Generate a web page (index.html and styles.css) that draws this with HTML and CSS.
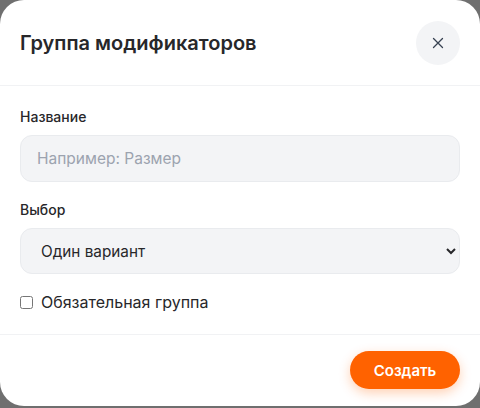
FILE: index.html
```html
<!DOCTYPE html>
<html lang="ru">
<head>
<meta charset="utf-8">
<title>Группа модификаторов</title>
<link rel="stylesheet" href="styles.css">
</head>
<body>
<div class="modal">
  <div class="modal-header">
    <h2 class="modal-title">Группа модификаторов</h2>
    <button class="close-btn" type="button" aria-label="Закрыть">
      <svg width="12" height="12" viewBox="0 0 12 12"><path d="M1.5 1.5 L10.5 10.5 M10.5 1.5 L1.5 10.5" stroke="#374151" stroke-width="1.3" stroke-linecap="round" fill="none"/></svg>
    </button>
  </div>
  <div class="modal-body">
    <div class="field">
      <label class="field-label" for="name">Название</label>
      <input class="control" id="name" type="text" placeholder="Например: Размер">
    </div>
    <div class="field">
      <label class="field-label" for="choice">Выбор</label>
      <select class="control select" id="choice">
        <option>Один вариант</option>
        <option>Несколько вариантов</option>
      </select>
    </div>
    <label class="check-row">
      <input type="checkbox" class="check">
      <span>Обязательная группа</span>
    </label>
  </div>
  <div class="modal-footer">
    <button class="primary-btn" type="button">Создать</button>
  </div>
</div>
</body>
</html>
```

FILE: styles.css
```css
html, body {
  margin: 0;
  padding: 0;
}
body {
  background: #6f6f6f;
  font-family: Inter, "Noto Sans", sans-serif;
  color: #1f2937;
  width: 480px;
  height: 408px;
  overflow: hidden;
}
.modal {
  background: #ffffff;
  width: 480px;
  height: 406px;
  border-radius: 24px;
  display: flex;
  flex-direction: column;
  box-sizing: border-box;
}
.modal-header {
  display: flex;
  align-items: center;
  justify-content: space-between;
  padding: 21px 20px 20px 20px;
  border-bottom: 1px solid #f1f2f4;
}
.modal-title {
  margin: 0;
  font-size: 20px;
  font-weight: 600;
  color: #27272a;
}
.close-btn {
  width: 44px;
  height: 44px;
  border-radius: 50%;
  border: none;
  background: #f3f4f6;
  display: flex;
  align-items: center;
  justify-content: center;
  padding: 0;
  cursor: pointer;
}
.modal-body {
  padding: 21px 20px 22px;
  display: flex;
  flex-direction: column;
  gap: 18px;
  border-bottom: 1px solid #f1f2f4;
}
.field {
  display: flex;
  flex-direction: column;
  gap: 8px;
}
.field-label {
  font-size: 14px;
  line-height: 20px;
  font-weight: 500;
  color: #27272a;
}
.control {
  box-sizing: border-box;
  width: 100%;
  height: 47px;
  border: 1px solid #e9ebee;
  border-radius: 12px;
  background: #f3f4f6;
  padding: 0 16px;
  font-family: Inter, "Noto Sans", sans-serif;
  font-size: 15.5px;
  color: #27272a;
  outline: none;
}
.control::placeholder {
  color: #9ca3af;
}
.select {
  height: 46px;
  font-size: 15.3px;
  padding: 0 4px 0 16px;
}
.check-row {
  display: flex;
  align-items: center;
  gap: 8px;
  font-size: 16px;
  line-height: 20px;
  color: #27272a;
}
.check {
  margin: 0;
  width: 13px;
  height: 13px;
}
.modal-footer {
  display: flex;
  justify-content: flex-end;
  padding: 16px 20px;
}
.primary-btn {
  width: 110px;
  height: 38px;
  border: none;
  border-radius: 19px;
  background: #ff6200;
  color: #ffffff;
  font-family: Inter, "Noto Sans", sans-serif;
  font-size: 15px;
  font-weight: 600;
  box-shadow: 0 4px 12px rgba(255, 98, 0, 0.3);
  cursor: pointer;
}
```
